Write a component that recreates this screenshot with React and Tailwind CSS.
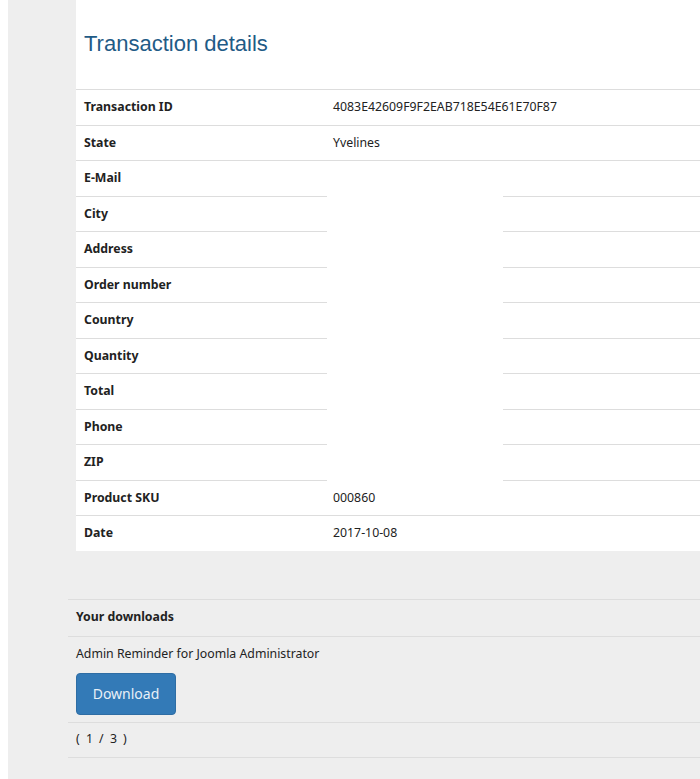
import React from "react";

const rows = [
  ["Transaction ID", "4083E42609F9F2EAB718E54E61E70F87"],
  ["State", "Yvelines"],
  ["E-Mail", ""],
  ["City", ""],
  ["Address", ""],
  ["Order number", ""],
  ["Country", ""],
  ["Quantity", ""],
  ["Total", ""],
  ["Phone", ""],
  ["ZIP", ""],
  ["Product SKU", "000860"],
  ["Date", "2017-10-08"],
];

export default function App() {
  return (
    <div className="flex min-h-[779px] bg-white text-[12.3px] text-[#222]" style={{ fontFamily: '"Noto Sans", "Open Sans", sans-serif' }}>
      <div className="w-[8px] shrink-0 bg-white" />
      <div className="flex-1 bg-[#eeeeee] pl-[60px]">
        {/* details panel */}
        <div className="ml-[8px] bg-white">
          <div className="h-[89px] pl-[8px] pt-[31px]">
            <h2 className="text-[22px] leading-[26px] text-[#1f5b86]" style={{ fontFamily: '"Liberation Sans", Arial, sans-serif' }}>
              Transaction details
            </h2>
          </div>
          <div className="relative">
            {rows.map(([label, value]) => (
              <div key={label} className="flex h-[35.5px] items-center border-t border-[#dddddd]">
                <div className="w-[251px] pl-[8px] font-bold">{label}</div>
                <div className="pl-[6px]">{value}</div>
              </div>
            ))}
            <div className="absolute left-[251px] top-[73px] h-[323px] w-[176px] bg-white" />
          </div>
        </div>

        {/* downloads */}
        <div className="mt-[48px] border-t border-[#dddddd]">
          <div className="flex h-[36px] items-center pl-[8px] font-bold">Your downloads</div>
          <div className="border-t border-[#dddddd] pl-[8px] pt-[8px] pb-[7px]">
            <div className="leading-[18px]">Admin Reminder for Joomla Administrator</div>
            <button className="mt-[10px] h-[42px] w-[100px] rounded-[4px] border border-[#2e6da4] bg-[#337ab7] text-[14px] text-[#e8f0f8]">
              Download
            </button>
          </div>
          <div className="flex h-[36px] items-center border-t border-b border-[#dddddd] pl-[8px] tracking-[1.5px]">( 1 / 3 )</div>
        </div>
      </div>
    </div>
  );
}
